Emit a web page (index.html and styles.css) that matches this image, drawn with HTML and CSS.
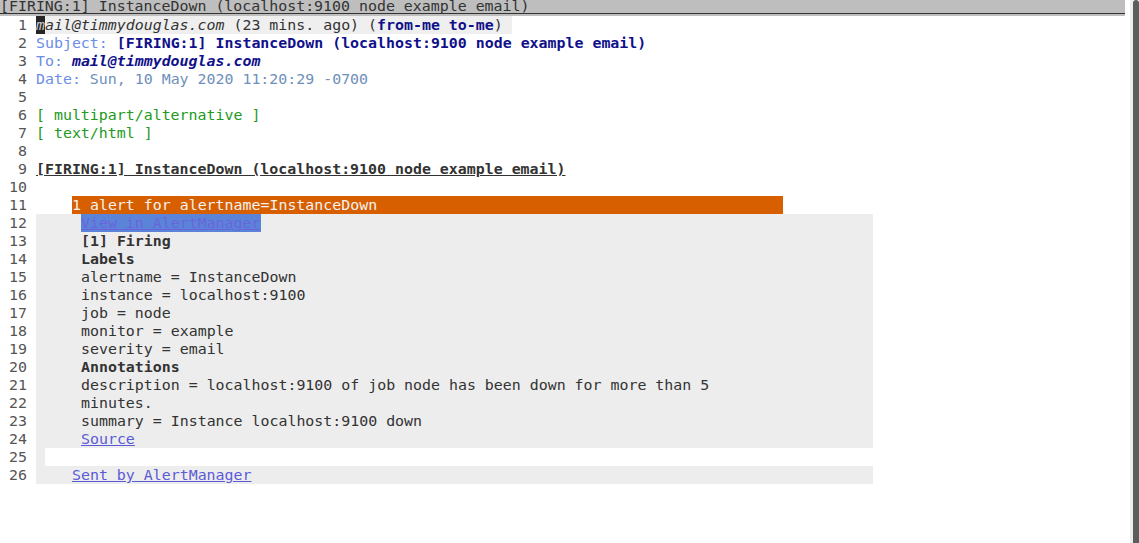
FILE: index.html
```html
<!DOCTYPE html>
<html>
<head>
<meta charset="utf-8">
<link rel="stylesheet" href="styles.css">
</head>
<body>
<div class="frame">
  <div class="main">
    <div class="header"><span class="htext">[FIRING:1] InstanceDown (localhost:9100 node example email)</span></div>
    <div class="lines">
      <div class="row"><span class="num">1</span><span class="txt"><span class="hl1"><span class="cursor">m</span><span class="from">ail@timmydouglas.com</span> (23 mins. ago) (<b class="navy">from-me to-me</b>) </span></span></div>
      <div class="row"><span class="num">2</span><span class="txt"><span class="key">Subject: </span><b class="navy">[FIRING:1] InstanceDown (localhost:9100 node example email)</b></span></div>
      <div class="row"><span class="num">3</span><span class="txt"><span class="key">To: </span><b class="navy"><i>mail@timmydouglas.com</i></b></span></div>
      <div class="row"><span class="num">4</span><span class="txt"><span class="key">Date: </span><span class="date">Sun, 10 May 2020 11:20:29 -0700</span></span></div>
      <div class="row"><span class="num">5</span><span class="txt"></span></div>
      <div class="row"><span class="num">6</span><span class="txt green">[ multipart/alternative ]</span></div>
      <div class="row"><span class="num">7</span><span class="txt green">[ text/html ]</span></div>
      <div class="row"><span class="num">8</span><span class="txt"></span></div>
      <div class="row"><span class="num">9</span><span class="txt"><b class="title">[FIRING:1] InstanceDown (localhost:9100 node example email)</b></span></div>
      <div class="row"><span class="num">10</span><span class="txt"></span></div>
      <div class="row"><span class="num">11</span><span class="txt"><span class="alertbar">1 alert for alertname=InstanceDown</span></span></div>
      <div class="row"><span class="num">12</span><span class="block"><a class="link sel">View in AlertManager</a></span></div>
      <div class="row"><span class="num">13</span><span class="block"><b>[1] Firing</b></span></div>
      <div class="row"><span class="num">14</span><span class="block"><b>Labels</b></span></div>
      <div class="row"><span class="num">15</span><span class="block">alertname = InstanceDown</span></div>
      <div class="row"><span class="num">16</span><span class="block">instance = localhost:9100</span></div>
      <div class="row"><span class="num">17</span><span class="block">job = node</span></div>
      <div class="row"><span class="num">18</span><span class="block">monitor = example</span></div>
      <div class="row"><span class="num">19</span><span class="block">severity = email</span></div>
      <div class="row"><span class="num">20</span><span class="block"><b>Annotations</b></span></div>
      <div class="row"><span class="num">21</span><span class="block">description = localhost:9100 of job node has been down for more than 5</span></div>
      <div class="row"><span class="num">22</span><span class="block">minutes.</span></div>
      <div class="row"><span class="num">23</span><span class="block">summary = Instance localhost:9100 down</span></div>
      <div class="row"><span class="num">24</span><span class="block"><a class="link">Source</a></span></div>
      <div class="row"><span class="num">25</span><span class="block gap"><span class="white"></span></span></div>
      <div class="row"><span class="num">26</span><span class="block footer"><a class="link">Sent by AlertManager</a></span></div>
    </div>
  </div>
  <div class="scroll">
    <div class="sgap"></div>
    <div class="strack"></div>
    <div class="sthumb"></div>
  </div>
</div>
</body>
</html>
```

FILE: styles.css
```css
html, body {
  margin: 0;
  padding: 0;
  background: #ffffff;
}
body {
  font-family: "DejaVu Sans Mono", "Liberation Mono", monospace;
  font-size: 14.92px;
  color: #333333;
  width: 1139px;
  height: 543px;
  overflow: hidden;
}
.frame {
  display: flex;
  height: 543px;
}
.main {
  width: 1125px;
  flex: none;
}
.header {
  height: 13px;
  background: #bebebe;
  border-bottom: 1px solid #333333;
  box-shadow: 0 2px 0 #bebebe;
  line-height: 12px;
  white-space: pre;
  color: #333333;
}
.lines {
  margin-top: 2px;
}
.row {
  display: flex;
  height: 18px;
  line-height: 18px;
  white-space: pre;
}
.num {
  width: 27px;
  padding-right: 9px;
  text-align: right;
  color: #555555;
  flex: none;
}
.txt {
  flex: none;
}
.hl1 {
  background: #efefef;
}
.cursor {
  background: #262626;
  color: #c8c8c8;
  font-style: italic;
}
.from {
  font-style: italic;
}
b {
  font-weight: bold;
}
.navy {
  color: #10108a;
}
.key {
  color: #6b8ee6;
}
.date {
  color: #6f8fba;
}
.green {
  color: #229a22;
}
.title {
  text-decoration: underline;
  color: #333333;
}
.alertbar {
  display: inline-block;
  margin-left: 36px;
  width: 711px;
  height: 18px;
  background: #d75f00;
  color: #f2f2f2;
}
.block {
  display: block;
  width: 837px;
  height: 18px;
  box-sizing: border-box;
  padding-left: 45px;
  background: #ededed;
  flex: none;
}
.block.footer {
  padding-left: 36px;
}
.block.gap {
  padding-left: 9px;
}
.white {
  display: block;
  height: 18px;
  background: #ffffff;
}
.link {
  color: #5b5bd6;
  text-decoration: underline;
}
.link.sel {
  background: #5b84d8;
  color: #6a64dc;
}
.scroll {
  display: flex;
  width: 14px;
  flex: none;
}
.sgap {
  width: 5px;
}
.strack {
  width: 3px;
  background: #efedeb;
}
.sthumb {
  width: 6px;
  background: #585e5e;
  border-radius: 3px 3px 0 0;
}
```
